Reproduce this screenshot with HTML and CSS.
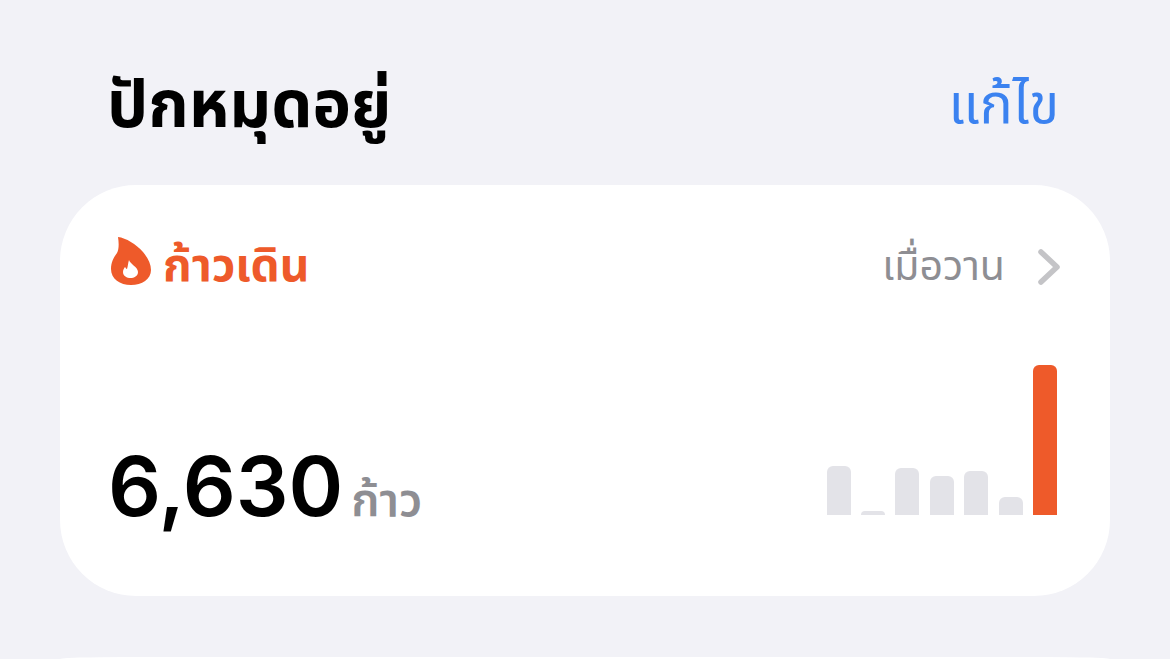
FILE: index.html
```html
<!DOCTYPE html>
<html lang="th">
<head>
    <meta charset="UTF-8">
    <meta name="viewport" content="width=device-width, initial-scale=1.0">
    <title>ปักหมุดอยู่</title>
    <link rel="stylesheet" href="styles.css">
</head>
<body>
    <!-- หัวข้อ -->
    <div class="section-header">
        <h1 class="section-title">ปักหมุดอยู่</h1>
        <span class="edit-link">แก้ไข</span>
    </div>

    <!-- การ์ดก้าวเดิน -->
    <div class="card">
        <div class="card-top">
            <div class="card-label">
                <svg class="flame" viewBox="0 0 40 48" width="40" height="48">
                    <path fill-rule="evenodd" fill="#ee5a2a" d="M7 0C15 1 25 7 32 15C37 21 40 27 40 33C40 42 31 48 20 48C9 48 0 42 0 32C0 25 3 20 6 16C8 13 8 6 7 0ZM18 23C17 26 17 29 16 32C15 32 15 31 14 30C13 31 12 33 12 35C12 39 16 41 19.5 41C23 41 27 39 27 35C27 30 19 27 18 23Z"/>
                </svg>
                <span class="label-text">ก้าวเดิน</span>
            </div>
            <div class="card-date">
                <span>เมื่อวาน</span>
                <svg class="chevron" viewBox="0 0 22 36" width="22" height="36">
                    <path d="M3 3L19 18L3 33" fill="none" stroke="#c4c4c7" stroke-width="5.5" stroke-linecap="round" stroke-linejoin="round"/>
                </svg>
            </div>
        </div>
        <div class="card-bottom">
            <div class="reading">
                <span class="value">6,630</span>
                <span class="unit">ก้าว</span>
            </div>
            <div class="bars">
                <div class="bar" style="height: 49px"></div>
                <div class="bar" style="height: 4px"></div>
                <div class="bar" style="height: 47px"></div>
                <div class="bar" style="height: 39px"></div>
                <div class="bar" style="height: 44px"></div>
                <div class="bar" style="height: 18px"></div>
                <div class="bar today" style="height: 150px"></div>
            </div>
        </div>
    </div>

    <div class="next-card"></div>
</body>
</html>
```

FILE: styles.css
```css
* {
    margin: 0;
    padding: 0;
    box-sizing: border-box;
}

body {
    font-family: "Noto Sans Thai", "Noto Sans", "Liberation Sans", "DejaVu Sans", sans-serif;
    background-color: #f2f2f7;
    width: 1170px;
    height: 659px;
    overflow: hidden;
    padding: 0 60px;
}

.section-header {
    height: 185px;
    padding: 67px 51px 0 47px;
    display: flex;
    justify-content: space-between;
    align-items: flex-start;
}

.section-title {
    font-size: 65px;
    line-height: 80px;
    font-weight: 700;
    color: #000;
}

.edit-link {
    font-size: 55px;
    line-height: 80px;
    color: #3b82f0;
}

.card {
    background-color: #fff;
    border-radius: 76px;
    height: 411px;
    padding: 56px 50px 0 51px;
}

.next-card {
    height: 2px;
    margin-top: 61px;
    background-color: #fff;
    border-radius: 64px 64px 0 0 / 2px 2px 0 0;
}

.card-top {
    height: 52px;
    display: flex;
    justify-content: space-between;
    align-items: center;
}

.card-label {
    display: flex;
    align-items: center;
    gap: 12px;
}

.flame {
    margin-top: -12px;
}

.label-text {
    font-size: 46px;
    line-height: 52px;
    font-weight: 700;
    color: #ee5a2a;
}

.card-date {
    display: flex;
    align-items: center;
    gap: 33px;
    font-size: 41px;
    line-height: 52px;
    color: #8e8e93;
}

.card-bottom {
    margin-top: 72px;
    display: flex;
    justify-content: space-between;
    align-items: flex-end;
}

.reading {
    display: flex;
    align-items: baseline;
    gap: 8px;
    margin-left: -3px;
    margin-bottom: -13px;
}

.value {
    font-family: Inter, "Liberation Sans", sans-serif;
    font-size: 83px;
    line-height: 84px;
    font-weight: 600;
    color: #000;
}

.unit {
    font-size: 46px;
    line-height: 52px;
    font-weight: 600;
    color: #8e8e93;
}

.bars {
    display: flex;
    align-items: flex-end;
    gap: 10.4px;
    padding-right: 3px;
}

.bar {
    width: 24px;
    background-color: #e3e3e8;
    border-radius: 6px 6px 0 0;
}

.bar.today {
    background-color: #ee5a2a;
}
```
